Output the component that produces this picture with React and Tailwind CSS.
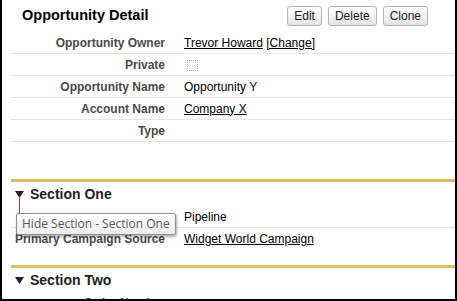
const fields = [
  { label: 'Opportunity Owner', value: 'owner' },
  { label: 'Private', value: 'check' },
  { label: 'Opportunity Name', value: 'Opportunity Y' },
  { label: 'Account Name', value: 'Company X', link: true },
  { label: 'Type', value: '' },
];

const Row = ({ label, children, line = true, h = 'h-[22px]' }) => (
  <div className={`ml-[9px] flex items-center ${h} ${line ? 'border-b border-[#e6e6e6]' : ''}`}>
    <div className="w-[154px] shrink-0 text-right text-[12px] font-bold text-[#4a4a4a]">{label}</div>
    <div className="pl-[19px] text-[12px] text-black">{children}</div>
  </div>
);

const Btn = ({ children }) => (
  <button className="h-[20px] rounded-[3px] border border-[#b5b5b5] bg-gradient-to-b from-white to-[#e4e4e4] px-[6px] text-[12px] text-[#222]">
    {children}
  </button>
);

const Triangle = () => (
  <svg width="9" height="7" viewBox="0 0 9 7" className="shrink-0">
    <path d="M0 0 L9 0 L4.5 7 Z" fill="#222" />
  </svg>
);

const SectionHead = ({ title, children }) => (
  <div className="relative ml-[9px] flex h-[24px] items-center gap-[6px] pl-[4px]">
    <Triangle />
    <span className="text-[14px] font-bold text-[#222]">{title}</span>
    {children}
  </div>
);

export default function App() {
  return (
    <div
      className="h-[301px] w-[457px] overflow-hidden border-b-2 border-l-2 border-r-2 border-black bg-white"
      style={{ fontFamily: '"Liberation Sans", Arial, sans-serif' }}
    >
      <div className="flex h-[32px] items-center justify-between pl-[20px] pr-[27px]">
        <h2 className="text-[14.5px] font-bold text-black">Opportunity Detail</h2>
        <div className="flex gap-[6px]">
          <Btn>Edit</Btn>
          <Btn>Delete</Btn>
          <Btn>Clone</Btn>
        </div>
      </div>

      {fields.map((f) => (
        <Row key={f.label} label={f.label}>
          {f.value === 'owner' ? (
            <span>
              <a className="underline">Trevor Howard</a> <a className="underline">[Change]</a>
            </span>
          ) : f.value === 'check' ? (
            <span className="mt-[2px] ml-[3px] block h-[11px] w-[11px] border border-dotted border-[#aaa]" />
          ) : f.link ? (
            <a className="underline">{f.value}</a>
          ) : (
            f.value
          )}
        </Row>
      ))}

      <div className="h-[37px]" />
      <div className="ml-[9px] h-[3px] bg-[#d6c169]" />

      <SectionHead title="Section One">
        <div className="absolute left-[8px] top-[15px] h-[16px] w-px bg-[#c0392b]" />
        <div
          className="absolute left-[5px] top-[31px] z-10 rounded-[2px] border border-[#8e8e8e] bg-gradient-to-b from-white to-[#ececec] px-[5px] py-px text-[12px] text-[#575757] shadow-[1px_2px_3px_rgba(0,0,0,0.3)]"
          style={{ fontFamily: '"Open Sans", "Noto Sans", sans-serif' }}
        >
          Hide Section - Section One
        </div>
      </SectionHead>
      <Row label="" h="h-[22px]">Pipeline</Row>
      <Row label="Primary Campaign Source" line={false}>
        <a className="underline">Widget World Campaign</a>
      </Row>
      <div className="h-[15px]" />
      <div className="ml-[9px] h-[3px] bg-[#d6c169]" />

      <SectionHead title="Section Two" />
      <Row label="Order Number" line={false} />
    </div>
  );
}
